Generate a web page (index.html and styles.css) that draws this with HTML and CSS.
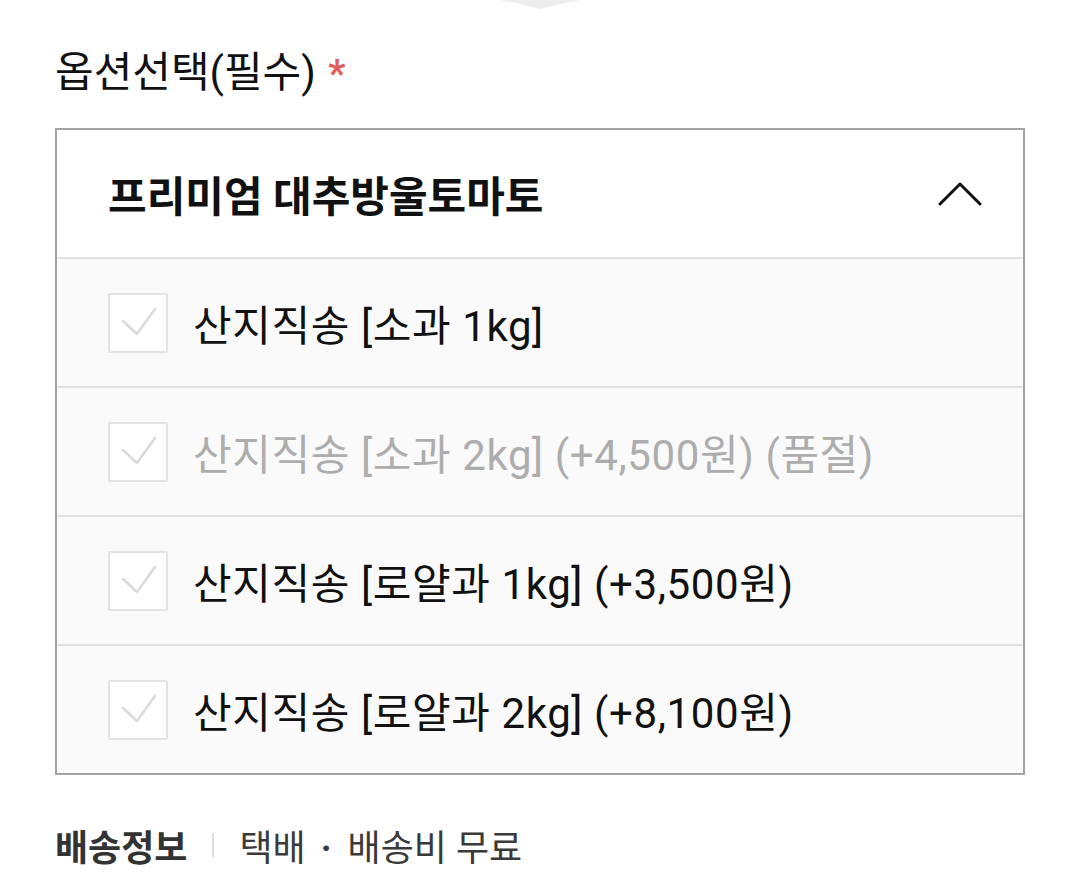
FILE: index.html
```html
<!DOCTYPE html>
<html lang="ko">
<head>
  <meta charset="UTF-8" />
  <meta name="viewport" content="width=device-width, initial-scale=1.0" />
  <title>옵션선택</title>
  <link rel="stylesheet" href="styles.css">
</head>
<body>
  <div class="handle">
    <svg width="80" height="10" viewBox="0 0 80 10"><polygon points="0,0 80,0 60,4 40,9 20,4" fill="#ededed"/></svg>
  </div>

  <div class="page">
    <div class="label">옵션선택(필수) <span class="req">*</span></div>

    <div class="select-box">
      <div class="select-head">
        <span>프리미엄 대추방울토마토</span>
        <svg class="chevron" width="44" height="26" viewBox="0 0 44 26">
          <polyline points="2,23 22,3 42,23" fill="none" stroke="#111" stroke-width="3" stroke-linecap="round" stroke-linejoin="round"/>
        </svg>
      </div>

      <div class="option">
        <span class="check"><svg width="56" height="56" viewBox="0 0 56 56"><polyline points="13,26 27,39 45,14" fill="none" stroke="#dadada" stroke-width="2.5" stroke-linecap="round" stroke-linejoin="round"/></svg></span>
        <span class="opt-text">산지직송 [소과 1kg]</span>
      </div>
      <div class="option soldout">
        <span class="check"><svg width="56" height="56" viewBox="0 0 56 56"><polyline points="13,26 27,39 45,14" fill="none" stroke="#dadada" stroke-width="2.5" stroke-linecap="round" stroke-linejoin="round"/></svg></span>
        <span class="opt-text">산지직송 [소과 2kg] (+4,500원) (품절)</span>
      </div>
      <div class="option">
        <span class="check"><svg width="56" height="56" viewBox="0 0 56 56"><polyline points="13,26 27,39 45,14" fill="none" stroke="#dadada" stroke-width="2.5" stroke-linecap="round" stroke-linejoin="round"/></svg></span>
        <span class="opt-text">산지직송 [로얄과 1kg] (+3,500원)</span>
      </div>
      <div class="option">
        <span class="check"><svg width="56" height="56" viewBox="0 0 56 56"><polyline points="13,26 27,39 45,14" fill="none" stroke="#dadada" stroke-width="2.5" stroke-linecap="round" stroke-linejoin="round"/></svg></span>
        <span class="opt-text">산지직송 [로얄과 2kg] (+8,100원)</span>
      </div>
    </div>

    <div class="delivery">
      <b>배송정보</b>
      <span class="bar"></span>
      <span>택배<span class="dot">·</span>배송비 무료</span>
    </div>
  </div>
</body>
</html>
```

FILE: styles.css
```css
body {
  margin: 0;
  background: #fff;
  color: #111;
  font-family: Roboto, 'Noto Sans CJK KR', sans-serif;
}
.handle {
  display: flex;
  justify-content: center;
  height: 10px;
  overflow: hidden;
}
.handle svg {
  display: block;
}
.page {
  padding: 0 55px;
}
.label {
  margin-top: 33px;
  height: 60px;
  line-height: 60px;
  font-size: 42px;
}
.req {
  color: #e35b5b;
  font-weight: bold;
  font-size: 38px;
  margin-left: 2px;
}
.select-box {
  margin-top: 25px;
  border: 2px solid #a3a3a3;
  background: #fafafa;
}
.select-head {
  display: flex;
  align-items: center;
  justify-content: space-between;
  height: 127px;
  padding: 0 41px 0 51px;
  background: #fff;
  font-size: 42px;
  font-weight: bold;
}
.chevron {
  display: block;
}
.option {
  display: flex;
  align-items: center;
  gap: 25px;
  height: 127px;
  padding: 0 51px;
  border-top: 2px solid #e2e2e2;
  font-size: 42px;
  letter-spacing: 0.6px;
}
.check {
  width: 56px;
  height: 56px;
  border: 2px solid #e3e3e3;
  border-radius: 2px;
  background: #fff;
  flex: none;
}
.check svg {
  display: block;
}
.soldout .opt-text {
  color: #adadad;
}
.delivery {
  display: flex;
  align-items: center;
  height: 50px;
  margin-top: 45px;
  font-size: 36px;
  color: #3a3a3a;
}
.delivery b {
  color: #333;
}
.bar {
  width: 2px;
  height: 24px;
  background: #ddd;
  margin: 0 25px;
}
.dot {
  font-weight: bold;
  margin: 0 16px 0 15px;
}
```
